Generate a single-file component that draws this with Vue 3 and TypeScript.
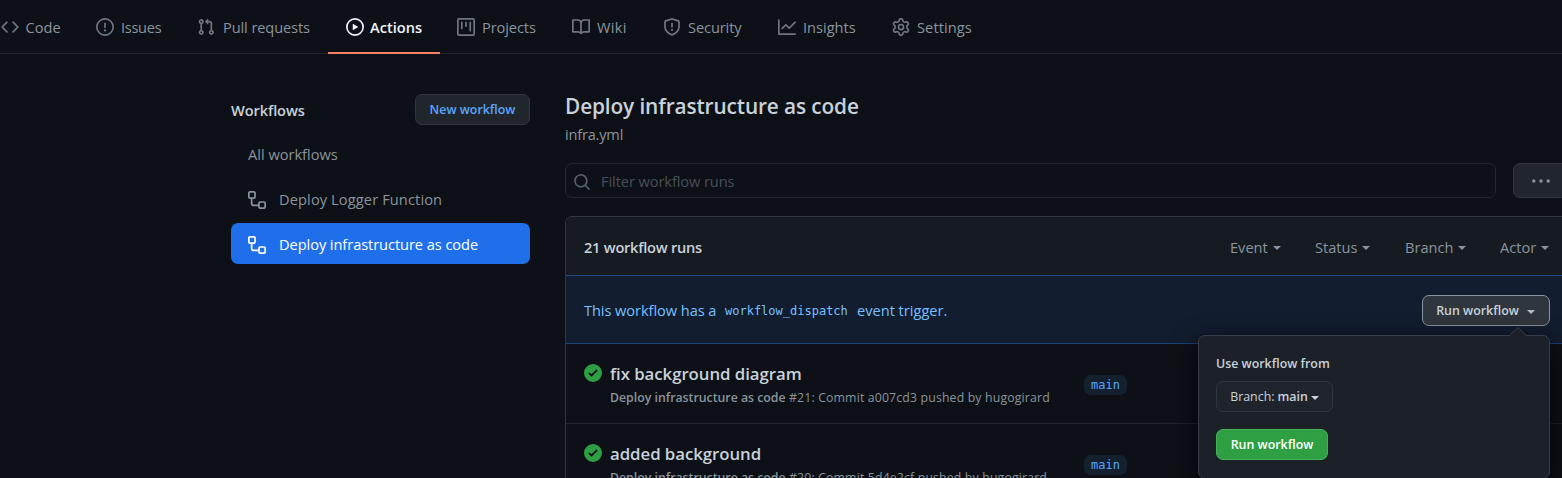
<script setup lang="ts">
interface NavItem {
  id: string
  label: string
  icon: string
  active?: boolean
}

const navItems: NavItem[] = [
  { id: 'code', label: 'Code', icon: 'M4.72 3.22a.75.75 0 011.06 1.06L2.06 8l3.72 3.72a.75.75 0 11-1.06 1.06L.47 8.53a.75.75 0 010-1.06l4.25-4.25zm6.56 0a.75.75 0 10-1.06 1.06L13.94 8l-3.72 3.72a.75.75 0 101.06 1.06l4.25-4.25a.75.75 0 000-1.06l-4.25-4.25z' },
  { id: 'issues', label: 'Issues', icon: 'M8 1.5a6.5 6.5 0 100 13 6.5 6.5 0 000-13zM0 8a8 8 0 1116 0A8 8 0 010 8zm9 3a1 1 0 11-2 0 1 1 0 012 0zm-.25-6.25a.75.75 0 00-1.5 0v3.5a.75.75 0 001.5 0v-3.5z' },
  { id: 'pulls', label: 'Pull requests', icon: 'M7.177 3.073L9.573.677A.25.25 0 0110 .854v4.792a.25.25 0 01-.427.177L7.177 3.427a.25.25 0 010-.354zM3.75 2.5a.75.75 0 100 1.5.75.75 0 000-1.5zm-2.25.75a2.25 2.25 0 113 2.122v5.256a2.251 2.251 0 11-1.5 0V5.372A2.25 2.25 0 011.5 3.25zM11 2.5h-1V4h1a1 1 0 011 1v5.628a2.251 2.251 0 101.5 0V5A2.5 2.5 0 0011 2.5zm1 10.25a.75.75 0 111.5 0 .75.75 0 01-1.5 0zM3.75 12a.75.75 0 100 1.5.75.75 0 000-1.5z' },
  { id: 'actions', label: 'Actions', active: true, icon: 'M1.5 8a6.5 6.5 0 1113 0 6.5 6.5 0 01-13 0zM8 0a8 8 0 100 16A8 8 0 008 0zM6.379 5.227A.25.25 0 006 5.442v5.117a.25.25 0 00.379.214l4.264-2.559a.25.25 0 000-.428L6.379 5.227z' },
  { id: 'projects', label: 'Projects', icon: 'M1.75 0A1.75 1.75 0 000 1.75v12.5C0 15.216.784 16 1.75 16h12.5A1.75 1.75 0 0016 14.25V1.75A1.75 1.75 0 0014.25 0H1.75zM1.5 1.75a.25.25 0 01.25-.25h12.5a.25.25 0 01.25.25v12.5a.25.25 0 01-.25.25H1.75a.25.25 0 01-.25-.25V1.75zM11.75 3a.75.75 0 00-.75.75v7.5a.75.75 0 001.5 0v-7.5a.75.75 0 00-.75-.75zm-8.25.75a.75.75 0 011.5 0v5.5a.75.75 0 01-1.5 0v-5.5zM8 3a.75.75 0 00-.75.75v3.5a.75.75 0 001.5 0v-3.5A.75.75 0 008 3z' },
  { id: 'wiki', label: 'Wiki', icon: 'M0 1.75A.75.75 0 01.75 1h4.253c1.227 0 2.317.59 3 1.501A3.744 3.744 0 0111.006 1h4.245a.75.75 0 01.75.75v10.5a.75.75 0 01-.75.75h-4.507a2.25 2.25 0 00-1.591.659l-.622.621a.75.75 0 01-1.06 0l-.622-.621A2.25 2.25 0 005.258 13H.75a.75.75 0 01-.75-.75V1.75zm8.755 3a2.25 2.25 0 012.25-2.25H14.5v9h-3.757c-.71 0-1.4.201-1.992.572l.004-7.322zm-1.504 7.324l.004-5.073-.002-2.253A2.25 2.25 0 005.003 2.5H1.5v9h3.757a3.75 3.75 0 011.994.574z' },
  { id: 'security', label: 'Security', icon: 'M7.467.133a1.75 1.75 0 011.066 0l5.25 1.68A1.75 1.75 0 0115 3.48V7c0 1.566-.32 3.182-1.303 4.682-.983 1.498-2.585 2.813-5.032 3.855a1.7 1.7 0 01-1.33 0c-2.447-1.042-4.049-2.357-5.032-3.855C1.32 10.182 1 8.566 1 7V3.48a1.75 1.75 0 011.217-1.667l5.25-1.68zm.61 1.429a.25.25 0 00-.153 0l-5.25 1.68a.25.25 0 00-.174.238V7c0 1.358.275 2.666 1.057 3.86.784 1.194 2.121 2.34 4.366 3.297a.2.2 0 00.154 0c2.245-.956 3.582-2.104 4.366-3.298C13.225 9.666 13.5 8.36 13.5 7V3.48a.25.25 0 00-.174-.237l-5.25-1.68zM9 10.5a1 1 0 11-2 0 1 1 0 012 0zm-.25-5.75a.75.75 0 10-1.5 0v3a.75.75 0 001.5 0v-3z' },
  { id: 'insights', label: 'Insights', icon: 'M1.5 1.75a.75.75 0 00-1.5 0v12.5c0 .414.336.75.75.75h14.5a.75.75 0 000-1.5H1.5V1.75zm14.28 2.53a.75.75 0 00-1.06-1.06L10 7.94 7.53 5.47a.75.75 0 00-1.06 0L3.22 8.72a.75.75 0 001.06 1.06L7 7.06l2.47 2.47a.75.75 0 001.06 0l5.25-5.25z' },
  { id: 'settings', label: 'Settings', icon: 'M7.429 1.525a6.593 6.593 0 011.142 0c.036.003.108.036.137.146l.289 1.105c.147.56.55.967.997 1.189.174.086.341.183.501.29.417.278.97.423 1.53.27l1.102-.303c.11-.03.175.016.195.046.219.31.41.641.573.989.014.031.022.11-.059.19l-.815.806c-.411.406-.562.957-.53 1.456a4.588 4.588 0 010 .582c-.032.499.119 1.05.53 1.456l.815.806c.08.08.073.159.059.19a6.494 6.494 0 01-.573.99c-.02.029-.086.074-.195.045l-1.103-.303c-.559-.153-1.112-.008-1.529.27-.16.107-.327.204-.5.29-.449.222-.851.628-.998 1.189l-.289 1.105c-.029.11-.101.143-.137.146a6.613 6.613 0 01-1.142 0c-.036-.003-.108-.037-.137-.146l-.289-1.105c-.147-.56-.55-.967-.997-1.189a4.502 4.502 0 01-.501-.29c-.417-.278-.97-.423-1.53-.27l-1.102.303c-.11.03-.175-.016-.195-.046a6.492 6.492 0 01-.573-.989c-.014-.031-.022-.11.059-.19l.815-.806c.411-.406.562-.957.53-1.456a4.587 4.587 0 010-.582c.032-.499-.119-1.05-.53-1.456l-.815-.806c-.08-.08-.073-.159-.059-.19a6.44 6.44 0 01.573-.99c.02-.029.086-.075.195-.045l1.103.303c.559.153 1.112.008 1.529-.27.16-.107.327-.204.5-.29.449-.222.851-.628.998-1.189l.289-1.105c.029-.11.101-.143.137-.146zM8 0c-.236 0-.47.01-.701.03-.743.065-1.29.615-1.458 1.261l-.29 1.106c-.017.066-.078.158-.211.224a5.994 5.994 0 00-.668.386c-.123.082-.233.09-.3.071L3.27 2.776c-.644-.177-1.392.02-1.82.63a7.977 7.977 0 00-.704 1.217c-.315.675-.111 1.422.363 1.891l.815.806c.05.048.098.147.088.294a6.084 6.084 0 000 .772c.01.147-.038.246-.088.294l-.815.806c-.474.469-.678 1.216-.363 1.891.2.428.436.835.704 1.218.428.609 1.176.806 1.82.63l1.103-.303c.066-.019.176-.011.299.071.213.143.436.272.668.386.133.066.194.158.212.224l.289 1.106c.169.646.715 1.196 1.458 1.26a8.094 8.094 0 001.402 0c.743-.064 1.29-.614 1.458-1.26l.29-1.106c.017-.066.078-.158.211-.224a5.98 5.98 0 00.668-.386c.123-.082.233-.09.3-.071l1.102.302c.644.177 1.392-.02 1.82-.63.268-.382.505-.789.704-1.217.315-.675.111-1.422-.364-1.891l-.814-.806c-.05-.048-.098-.147-.088-.294a6.1 6.1 0 000-.772c-.01-.147.039-.246.088-.294l.814-.806c.475-.469.679-1.216.364-1.891a7.992 7.992 0 00-.704-1.218c-.428-.609-1.176-.806-1.82-.63l-1.103.303c-.066.019-.176.011-.299-.071a5.991 5.991 0 00-.668-.386c-.133-.066-.194-.158-.212-.224L10.16 1.29C9.99.645 9.444.095 8.701.031A8.094 8.094 0 008 0zm1.5 8a1.5 1.5 0 11-3 0 1.5 1.5 0 013 0zM11 8a3 3 0 11-6 0 3 3 0 016 0z' },
]

const workflowIcon = 'M0 1.75C0 .784.784 0 1.75 0h3.5C6.216 0 7 .784 7 1.75v3.5A1.75 1.75 0 015.25 7H4v4a1 1 0 001 1h4v-1.25C9 9.784 9.784 9 10.75 9h3.5c.966 0 1.75.784 1.75 1.75v3.5A1.75 1.75 0 0114.25 16h-3.5A1.75 1.75 0 019 14.25v-.75H5A2.5 2.5 0 012.5 11V7h-.75A1.75 1.75 0 010 5.25v-3.5zm1.75-.25a.25.25 0 00-.25.25v3.5c0 .138.112.25.25.25h3.5a.25.25 0 00.25-.25v-3.5a.25.25 0 00-.25-.25h-3.5zm9 9a.25.25 0 00-.25.25v3.5c0 .138.112.25.25.25h3.5a.25.25 0 00.25-.25v-3.5a.25.25 0 00-.25-.25h-3.5z'

const workflows = [
  { name: 'Deploy Logger Function', id: 'logger', selected: false },
  { name: 'Deploy infrastructure as code', id: 'infra', selected: true },
]

const filters = ['Event', 'Status', 'Branch', 'Actor']

const runs = [
  { title: 'fix background diagram', id: 'r21', number: 21, commit: 'a007cd3', branch: 'main' },
  { title: 'added background', id: 'r20', number: 20, commit: '5d4e2cf', branch: 'main' },
]
</script>

<template>
  <div class="page">
    <nav class="nav">
      <a v-for="item in navItems" :key="item.id" class="nav-item" :class="[item.id, { active: item.active }]">
        <svg class="icon" viewBox="0 0 16 16"><path fill-rule="evenodd" :d="item.icon" /></svg>
        <span>{{ item.label }}</span>
      </a>
    </nav>

    <div class="layout">
      <aside class="sidebar">
        <div class="side-head">
          <h3>Workflows</h3>
          <button class="btn new-btn">New workflow</button>
        </div>
        <a class="side-item all">All workflows</a>
        <a v-for="w in workflows" :key="w.id" class="side-item" :class="[w.id, { selected: w.selected }]">
          <svg class="icon" viewBox="0 0 16 16"><path fill-rule="evenodd" :d="workflowIcon" /></svg>
          <span>{{ w.name }}</span>
        </a>
      </aside>

      <main class="main">
        <h2>Deploy infrastructure as code</h2>
        <div class="file">infra.yml</div>
        <div class="tools">
          <div class="search">
            <svg class="icon" viewBox="0 0 16 16"><path fill-rule="evenodd" d="M11.5 7a4.499 4.499 0 11-8.998 0A4.499 4.499 0 0111.5 7zm-.82 4.74a6 6 0 111.06-1.06l3.04 3.04a.75.75 0 11-1.06 1.06l-3.04-3.04z" /></svg>
            <span>Filter workflow runs</span>
          </div>
          <button class="btn more">
            <svg class="icon" viewBox="0 0 16 16"><circle cx="1.6" cy="8" r="1.5" /><circle cx="8" cy="8" r="1.5" /><circle cx="14.4" cy="8" r="1.5" /></svg>
          </button>
        </div>

        <section class="box">
          <header class="box-head">
            <strong>21 workflow runs</strong>
            <div class="filters">
              <span v-for="f in filters" :key="f" class="filter" :class="`by-${f.toLowerCase()}`">{{ f }}<i class="caret" /></span>
            </div>
          </header>

          <div class="dispatch">
            <p><span class="lead">This workflow has a</span><code>workflow_dispatch</code><span class="tail">event trigger.</span></p>
            <div class="run-menu">
              <button class="btn run-btn"><span>Run workflow</span><i class="caret" /></button>
              <div class="popover">
                <svg class="tip" viewBox="0 0 18 9"><path d="M0 9 9 0.5 18 9" /></svg>
                <div class="pop-title">Use workflow from</div>
                <button class="btn branch-btn"><span>Branch:</span><b>main</b><i class="caret" /></button>
                <button class="btn primary">Run workflow</button>
              </div>
            </div>
          </div>

          <article v-for="r in runs" :key="r.id" class="run">
            <svg class="icon check" viewBox="0 0 16 16"><path fill-rule="evenodd" d="M8 16A8 8 0 108 0a8 8 0 000 16zm3.78-9.72a.75.75 0 00-1.06-1.06L6.75 9.19 5.28 7.72a.75.75 0 00-1.06 1.06l2 2a.75.75 0 001.06 0l4.5-4.5z" /></svg>
            <div class="run-info">
              <div class="run-title">{{ r.title }}</div>
              <div class="run-meta"><b>Deploy infrastructure as code</b> #{{ r.number }}: Commit {{ r.commit }} pushed by hugogirard</div>
            </div>
            <span class="branch">{{ r.branch }}</span>
          </article>
        </section>
      </main>
    </div>
  </div>
</template>

<style>
body {
  background: #0d1117;
}
</style>

<style scoped>
.page {
  width: 1562px;
  height: 478px;
  overflow: hidden;
  background: #0d1117;
  color: #c9d1d9;
  font-family: "Open Sans", "Noto Sans", sans-serif;
  font-size: 14.6px;
  line-height: 20px;
  white-space: nowrap;
}
.page * { box-sizing: border-box; }
.icon { width: 18px; height: 18px; flex: none; fill: currentColor; }
h2, h3, p { margin: 0; }

.nav { display: flex; height: 54px; margin-left: -18px; border-bottom: 1px solid #21262d; }
.nav-item { display: flex; align-items: center; flex: none; gap: 7px; height: 54px; padding: 0 0 0 18px; color: #8b949e; }
.nav-item .icon { color: #6e7681; }
.nav-item.active { color: #f0f6fc; font-weight: 600; border-bottom: 2px solid #f78166; padding-top: 2px; }
.nav-item.active .icon { color: #f0f6fc; }
.nav-item.code { width: 96px; padding-left: 18.5px; }
.nav-item.issues { width: 101px; letter-spacing: -.3px; }
.nav-item.pulls { width: 149px; gap: 8px; letter-spacing: -.1px; }
.nav-item.actions { width: 112px; gap: 6px; }
.nav-item.projects { width: 114px; padding-left: 17px; letter-spacing: -.1px; }
.nav-item.wiki { width: 91px; letter-spacing: .3px; }
.nav-item.security { width: 115px; letter-spacing: -.1px; }
.nav-item.insights { width: 113px; }
.nav-item.settings { padding-left: 18.5px; gap: 7.5px; letter-spacing: .1px; }

.layout { display: flex; }
.sidebar { width: 299px; margin-left: 231px; padding-top: 40px; flex: none; }
.side-head { display: flex; justify-content: space-between; align-items: center; height: 31px; margin-bottom: 8px; }
h3 { font-size: 14.6px; font-weight: 600; letter-spacing: -.1px; }
.btn {
  display: flex; align-items: center; justify-content: center; flex: none; height: 31px; padding: 0;
  border: 1px solid #30363d; border-radius: 7px; background: #21262d; color: #c9d1d9;
  font-family: inherit; font-size: 12.4px; font-weight: 600; line-height: 20px;
}
.new-btn { width: 115px; color: #58a6ff; }
.side-item { display: flex; align-items: center; gap: 13px; height: 41px; margin-bottom: 4px; padding-left: 17px; border-radius: 7px; color: #8b949e; }
.side-item .icon { margin-top: 2px; }
.side-item.logger { letter-spacing: .12px; }
.side-item.infra { letter-spacing: -.06px; }
.side-item.selected { background: #1f6feb; color: #fff; }

.main { width: 1040px; margin-left: 35px; padding-top: 38px; flex: none; }
h2 { font-size: 20.8px; font-weight: 600; line-height: 28px; letter-spacing: -.11px; }
.file { margin-top: 4px; color: #8b949e; letter-spacing: -.2px; }
.tools { display: flex; gap: 17px; margin-top: 19px; }
.search { display: flex; align-items: center; gap: 10px; width: 931px; height: 35px; padding-left: 7px; border: 1px solid #21262d; border-radius: 7px; color: #484f58; flex: none; letter-spacing: -.08px; }
.search .icon { color: #545d68; margin-top: 2px; }
.more { width: 55px; height: 35px; color: #8b949e; }

.box { margin-top: 18px; border: 1px solid #30363d; border-radius: 7px; height: 300px; }
.box-head { display: flex; align-items: center; height: 58px; padding-left: 18px; padding-top: 1px; background: #161b22; border-radius: 6px 6px 0 0; }
.box-head strong { font-weight: 600; width: 646px; letter-spacing: -.25px; }
.filters { display: flex; color: #8b949e; }
.filter { display: flex; align-items: center; }
.filter.by-event { width: 85px; }
.filter.by-status { width: 90px; }
.filter.by-branch { width: 95px; }
.caret { width: 0; height: 0; margin-left: 5px; border: 4.5px solid transparent; border-top-color: currentColor; border-bottom: 0; margin-top: 2px; flex: none; }

.dispatch { display: flex; align-items: center; height: 69px; padding-left: 18px; background: #121d2f; border-top: 1px solid #1f4b85; border-bottom: 1px solid #1f4273; color: #79c0ff; }
.dispatch p { display: flex; align-items: center; width: 838px; }
.lead { width: 141px; letter-spacing: -.06px; }
code { width: 132px; font: 12px/20px "DejaVu Sans Mono", monospace; padding-top: 2px; }
.run-menu { position: relative; margin-top: 2px; }
.run-btn { width: 128px; background: #30363d; border-color: #8b949e; }
.run-btn .caret { margin-left: 8px; margin-right: 1px; color: #b1bac4; }
.popover {
  position: absolute; top: 40px; right: 0; width: 352px; height: 144px; padding: 18px 17px;
  background: #1c2128; border: 1px solid #373e47; border-radius: 7px; color: #c9d1d9;
  box-shadow: 0 9px 27px #010409;
}
.tip { position: absolute; top: -9px; right: 22px; width: 18px; height: 9px; fill: #1c2128; stroke: #373e47; }
.pop-title { font-size: 12.4px; font-weight: 600; line-height: 20px; }
.branch-btn { width: 117px; margin-top: 7px; font-weight: 400; background: #1f242c; }
.branch-btn b { margin-left: 3px; font-weight: 600; }
.branch-btn .caret { margin-left: 3px; }
.primary { width: 112px; margin-top: 17px; padding-top: 1px; background: #2ea043; border-color: #46b058; color: #fff; }

.run { display: flex; height: 80px; padding: 19px 0 0 18px; border-bottom: 1px solid #21262d; }
.check { margin-top: 1px; color: #2ea043; }
.run-info { width: 482px; padding-left: 8px; flex: none; }
.run-title { font-size: 16.8px; font-weight: 600; line-height: 22px; letter-spacing: -.04px; }
.run-meta { margin-top: 3px; font-size: 12.3px; line-height: 20px; color: #8b949e; letter-spacing: .15px; }
.run-meta b { font-weight: 600; letter-spacing: 0; }
.branch { height: 20px; margin-top: 12px; padding: 0 7px; border-radius: 7px; background: #15202e; color: #58a6ff; font: 12px/21px "DejaVu Sans Mono", monospace; }
</style>
